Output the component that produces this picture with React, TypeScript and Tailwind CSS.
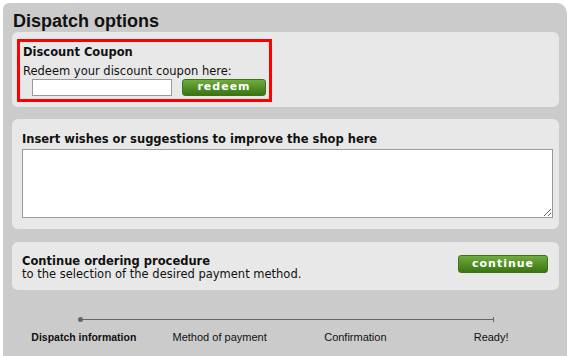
import React from 'react';

const steps = [
  { label: 'Dispatch information', active: true },
  { label: 'Method of payment', active: false },
  { label: 'Confirmation', active: false },
  { label: 'Ready!', active: false },
];

const GreenButton = ({ children, className }: { children: React.ReactNode; className: string }) => (
  <button
    className={`flex items-center justify-center rounded-[3px] border border-[#3d7317] bg-gradient-to-b from-[#6fad3c] to-[#3a7511] text-[11px] font-bold tracking-[1px] text-white ${className}`}
  >
    {children}
  </button>
);

export default function App() {
  return (
    <div className="h-[356px] w-[570px] bg-white pl-[3px] pt-[3px] font-['DejaVu_Sans',Verdana,sans-serif] text-[#111]">
      <div className="h-[353px] w-[564px] rounded-tl-[6px] rounded-tr-[10px] bg-[#cccbcb] pl-[9px] pr-[8px]">
        {/* Title */}
        <h1 className="h-[29px] pl-[1px] pt-[7px] font-['Liberation_Sans',Arial,sans-serif] text-[18px] font-bold leading-[22px]">
          Dispatch options
        </h1>

        {/* Discount coupon */}
        <div className="h-[75px] rounded-[6px] bg-[#e8e8e8] pl-[5px] pt-[7px]">
          <div className="h-[63px] w-[255px] border-[3px] border-[#ff0000] pl-[3px]">
            <div className="pt-[3px] text-[11.5px] font-bold leading-[14px]">Discount Coupon</div>
            <div className="mt-[5px] text-[11.5px] leading-[14px]">Redeem your discount coupon here:</div>
            <div className="mt-[1px] flex items-center pl-[9px]">
              <input type="text" className="h-[17px] w-[140px] border border-[#999] bg-white" />
              <GreenButton className="ml-[10px] h-[17px] w-[84px]">redeem</GreenButton>
            </div>
          </div>
        </div>

        {/* Wishes */}
        <div className="mt-[12px] h-[110px] rounded-[6px] bg-[#e8e8e8] pl-[10px] pr-[6px] pt-[13px]">
          <div className="text-[11.5px] font-bold leading-[14px]">Insert wishes or suggestions to improve the shop here</div>
          <textarea className="mt-[3px] block h-[69px] w-[531px] border border-[#999] bg-white" />
        </div>

        {/* Continue */}
        <div className="mt-[13px] flex h-[48px] items-start justify-between rounded-[6px] bg-[#e8e8e8] pl-[10px] pr-[11px] pt-[13px]">
          <div className="text-[11.5px] leading-[13px]">
            <div className="font-bold">Continue ordering procedure</div>
            <div>to the selection of the desired payment method.</div>
          </div>
          <GreenButton className="h-[18px] w-[90px]">continue</GreenButton>
        </div>

        {/* Progress */}
        <div className="pl-[4px] pt-[27px]">
          <div className="relative ml-[64px] h-[5px] w-[414px]">
            <div className="absolute left-0 top-[2px] h-px w-full bg-[#666]" />
            <div className="absolute left-[-2px] top-0 h-[5px] w-[5px] rounded-full bg-[#666]" />
            <div className="absolute right-0 top-0 h-[5px] w-px bg-[#666]" />
          </div>
          <div className="mt-[9px] grid grid-cols-4 font-['Liberation_Sans',Arial,sans-serif]">
            {steps.map((s) => (
              <div
                key={s.label}
                className={`text-center leading-[13px] ${s.active ? 'text-[10.5px] font-bold' : 'text-[11px]'}`}
              >
                {s.label}
              </div>
            ))}
          </div>
        </div>
      </div>
    </div>
  );
}
